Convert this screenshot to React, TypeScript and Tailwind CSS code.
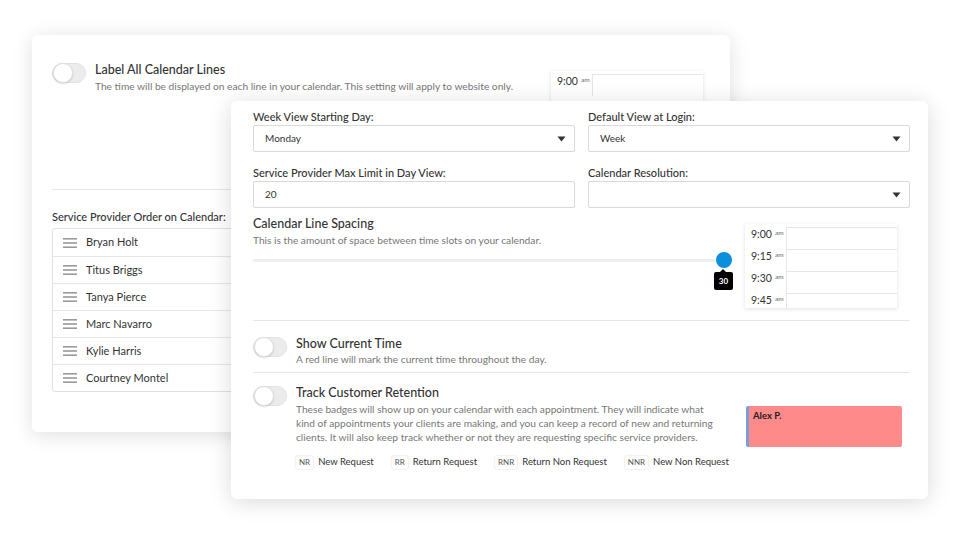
import React from 'react';

const FONT = { fontFamily: 'Lato, "Open Sans", Arial, sans-serif' };

const PROVIDERS = ['Bryan Holt', 'Titus Briggs', 'Tanya Pierce', 'Marc Navarro', 'Kylie Harris', 'Courtney Montel'];
const SLOTS = ['9:00', '9:15', '9:30', '9:45'];
const BADGES = [
  { code: 'NR', label: 'New Request' },
  { code: 'RR', label: 'Return Request' },
  { code: 'RNR', label: 'Return Non Request' },
  { code: 'NNR', label: 'New Non Request' },
];

function Toggle() {
  return (
    <div className="relative h-[20px] w-[34px] shrink-0 rounded-full border border-[#e2e2e2] bg-[#ececec]">
      <div className="absolute left-0 top-[-1px] h-[20px] w-[20px] rounded-full border border-[#e0e0e0] bg-white shadow-[0_1px_2px_rgba(0,0,0,0.15)]" />
    </div>
  );
}

function Caret() {
  return (
    <svg width="9" height="6" viewBox="0 0 9 6" className="shrink-0">
      <path d="M0.5 0.5 L8.5 0.5 L4.5 5.5 Z" fill="#333" />
    </svg>
  );
}

function Hamburger() {
  return (
    <svg width="14" height="10" viewBox="0 0 14 10" className="shrink-0">
      <rect x="0" y="0" width="14" height="1.6" fill="#9a9a9a" />
      <rect x="0" y="4.2" width="14" height="1.6" fill="#9a9a9a" />
      <rect x="0" y="8.4" width="14" height="1.6" fill="#9a9a9a" />
    </svg>
  );
}

function Field({ label, value, select }: { label: string; value: string; select?: boolean }) {
  return (
    <div className="flex flex-col">
      <div className="h-[16px] text-[11px] font-medium leading-[16px] text-[#333]">{label}</div>
      <div className="flex h-[27px] items-center justify-between rounded-[2px] border border-[#d9d9d9] bg-white pl-[11px] pr-[8px] text-[10px] text-[#333]">
        <span>{value}</span>
        {select && <Caret />}
      </div>
    </div>
  );
}

function SlotPreview({ slots }: { slots: string[] }) {
  return (
    <div className="h-[84px] w-[152px] overflow-hidden bg-white pt-[3px] shadow-[0_1px_4px_rgba(0,0,0,0.12)]">
      {slots.map((s) => (
        <div key={s} className="flex h-[22px]">
          <div className="w-[42px] border-r border-[#e6e6e6] pl-[6px] pt-[0px] text-[10.5px] text-[#333]">
            {s}
            <sup className="ml-[3px] text-[6.5px] text-[#666]">am</sup>
          </div>
          <div className="flex-1 border-t border-[#e6e6e6]" />
        </div>
      ))}
    </div>
  );
}

export default function App() {
  return (
    <div className="relative h-[540px] w-[960px] overflow-hidden bg-white" style={FONT}>
      {/* back card */}
      <div className="absolute left-[32px] top-[35px] h-[397px] w-[698px] rounded-[6px] bg-white px-[20px] pt-[28px] shadow-[0_3px_20px_rgba(0,0,0,0.13)]">
        <div className="flex h-[76px]">
          <Toggle />
          <div className="ml-[9px] flex-1">
            <div className="text-[12.5px] font-medium leading-[14px] text-[#333]">Label All Calendar Lines</div>
            <div className="mt-[3px] text-[10.2px] leading-[12px] text-[#777]">
              The time will be displayed on each line in your calendar. This setting will apply to website only.
            </div>
          </div>
          <div className="mr-[7px] mt-[8px]">
            <SlotPreview slots={['9:00']} />
          </div>
        </div>
        <div className="mt-[50px] border-t border-[#e6e6e6]" />
        <div className="mt-[20px] text-[11px] font-medium leading-[13px] text-[#333]">Service Provider Order on Calendar:</div>
        <div className="mt-[5px] w-[330px] rounded-[3px] border border-[#e0e0e0]">
          {PROVIDERS.map((p, i) => (
            <div key={p} className={`flex h-[27px] items-center gap-[9px] pl-[10px] text-[11px] text-[#333] ${i > 0 ? 'border-t border-[#e6e6e6]' : ''}`}>
              <Hamburger />
              <span>{p}</span>
            </div>
          ))}
        </div>
      </div>

      {/* front card */}
      <div className="absolute left-[231px] top-[101px] h-[398px] w-[697px] rounded-[6px] bg-white pl-[22px] pr-[18px] pt-[8px] shadow-[0_3px_22px_rgba(0,0,0,0.15)]">
        <div className="grid grid-cols-2 gap-x-[13px] gap-y-[13px]">
          <Field label="Week View Starting Day:" value="Monday" select />
          <Field label="Default View at Login:" value="Week" select />
          <Field label="Service Provider Max Limit in Day View:" value="20" />
          <Field label="Calendar Resolution:" value="" select />
        </div>

        <div className="mt-[9px] flex">
          <div className="flex-1">
            <div className="text-[12.5px] font-medium leading-[14px] text-[#333]">Calendar Line Spacing</div>
            <div className="mt-[3px] text-[10.2px] leading-[12px] text-[#777]">
              This is the amount of space between time slots on your calendar.
            </div>
            <div className="relative mt-[13px] h-[3px] w-[472px] bg-[#f0f0f0]">
              <div className="absolute right-[-7px] top-[-7px] h-[16px] w-[16px] rounded-full bg-[#0b8fdc]" />
              <div className="absolute right-[-8px] top-[13px] flex h-[18px] w-[19px] items-center justify-center rounded-[2px] bg-black text-[8px] font-bold text-white">
                <div className="absolute left-[6px] top-[-3px] h-0 w-0 border-x-[3px] border-b-[3px] border-x-transparent border-b-black" />
                30
              </div>
            </div>
          </div>
          <div className="mr-[13px] mt-[7px]">
            <SlotPreview slots={SLOTS} />
          </div>
        </div>

        <div className="mt-[12px] border-t border-[#e6e6e6]" />

        <div className="flex pt-[16px]">
          <Toggle />
          <div className="ml-[9px]">
            <div className="text-[12.5px] font-medium leading-[14px] text-[#333]">Show Current Time</div>
            <div className="mt-[2px] text-[10.2px] leading-[12px] text-[#777]">A red line will mark the current time throughout the day.</div>
          </div>
        </div>

        <div className="mt-[7px] border-t border-[#e6e6e6]" />

        <div className="flex pt-[13px]">
          <Toggle />
          <div className="ml-[9px] flex-1">
            <div className="text-[12.5px] font-medium leading-[14px] text-[#333]">Track Customer Retention</div>
            <div className="mt-[2px] w-[420px] text-[10.2px] leading-[14px] text-[#777]">
              These badges will show up on your calendar with each appointment. They will indicate what kind of appointments your clients are making, and you can keep a record of new and returning clients. It will also keep track whether or not they are requesting specific service providers.
            </div>
            <div className="mt-[11px] flex items-center whitespace-nowrap text-[9.5px] text-[#333]">
              {BADGES.map((b, i) => (
                <div key={b.code} className={`flex items-center gap-[5px] ${i > 0 ? 'ml-[18px]' : ''}`}>
                  <span className="rounded-[2px] bg-white px-[3px] py-[1.5px] text-[8px] leading-[10px] text-[#555] shadow-[0_0_2px_rgba(0,0,0,0.2)]">{b.code}</span>
                  <span>{b.label}</span>
                </div>
              ))}
            </div>
          </div>
          <div className="mr-[8px] mt-[20px] h-[41px] w-[156px] shrink-0 rounded-[2px] border-l-[3px] border-[#7a9fd8] bg-[#ff8a8a] pl-[4px] pt-[3px] text-[9.5px] font-bold text-[#222]">
            Alex P.
          </div>
        </div>
      </div>
    </div>
  );
}
